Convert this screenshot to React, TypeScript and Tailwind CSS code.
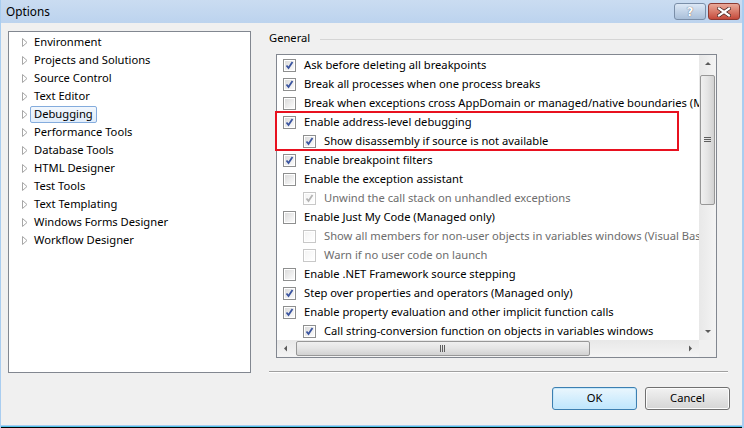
import React from "react";

const FONT = { fontFamily: '"Noto Sans", "Liberation Sans", sans-serif' };

function Tri() {
  return (
    <svg width="6" height="9" viewBox="0 0 6 9" className="shrink-0">
      <path d="M0.5 0.5 L5 4.5 L0.5 8.5 Z" fill="#ffffff" stroke="#a6a6a6" strokeWidth="1" />
    </svg>
  );
}

function Check({ checked, disabled }: { checked: boolean; disabled?: boolean }) {
  return (
    <div
      className={
        "w-[13px] h-[13px] shrink-0 border p-[1px] " +
        (disabled ? "border-[#c8c8c8] bg-white" : "border-[#8e8f8f] bg-white")
      }
    >
      <div
        className={
          "w-full h-full relative " +
          (disabled
            ? "bg-gradient-to-br from-[#f4f4f4] to-[#ffffff]"
            : "bg-gradient-to-br from-[#dcdcdc] to-[#fbfbfb]")
        }
      >
        {checked && (
          <svg width="9" height="9" viewBox="0 0 9 9" className="absolute left-0 top-0">
            <path
              d="M1.5 4.5 L3.5 7 L7.5 1"
              fill="none"
              stroke={disabled ? "#b4b4b4" : "#3b55a0"}
              strokeWidth="1.8"
            />
          </svg>
        )}
      </div>
    </div>
  );
}

type Row = { text: string; checked: boolean; indent?: boolean; disabled?: boolean };

const rows: Row[] = [
  { text: "Ask before deleting all breakpoints", checked: true },
  { text: "Break all processes when one process breaks", checked: true },
  { text: "Break when exceptions cross AppDomain or managed/native boundaries (Managed only)", checked: false },
  { text: "Enable address-level debugging", checked: true },
  { text: "Show disassembly if source is not available", checked: true, indent: true },
  { text: "Enable breakpoint filters", checked: true },
  { text: "Enable the exception assistant", checked: false },
  { text: "Unwind the call stack on unhandled exceptions", checked: true, indent: true, disabled: true },
  { text: "Enable Just My Code (Managed only)", checked: false },
  { text: "Show all members for non-user objects in variables windows (Visual Basic only)", checked: false, indent: true, disabled: true },
  { text: "Warn if no user code on launch", checked: false, indent: true, disabled: true },
  { text: "Enable .NET Framework source stepping", checked: false },
  { text: "Step over properties and operators (Managed only)", checked: true },
  { text: "Enable property evaluation and other implicit function calls", checked: true },
  { text: "Call string-conversion function on objects in variables windows", checked: true, indent: true },
];

const tree = [
  "Environment",
  "Projects and Solutions",
  "Source Control",
  "Text Editor",
  "Debugging",
  "Performance Tools",
  "Database Tools",
  "HTML Designer",
  "Test Tools",
  "Text Templating",
  "Windows Forms Designer",
  "Workflow Designer",
];

function ArrowBtn({ dir }: { dir: "up" | "down" | "left" | "right" }) {
  const paths: Record<string, string> = {
    up: "M1 4 L4 1 L7 4 Z",
    down: "M1 1 L4 4 L7 1 Z",
    left: "M4 0.5 L1 3.5 L4 6.5 Z",
    right: "M1 0.5 L4 3.5 L1 6.5 Z",
  };
  const vert = dir === "up" || dir === "down";
  return (
    <div className="w-[17px] h-[17px] shrink-0 flex items-center justify-center">
      <svg width={vert ? 8 : 5} height={vert ? 5 : 7} viewBox={vert ? "0 0 8 5" : "0 0 5 7"}>
        <path d={paths[dir]} fill="#5a5a5a" />
      </svg>
    </div>
  );
}

export default function App() {
  return (
    <div
      className="w-[744px] h-[428px] overflow-hidden flex flex-col bg-[#f0f0f0] border-l border-l-[#a9cdf0] border-r-2 border-r-[#a9cdf0] text-[11.2px] text-black"
      style={FONT}
    >
      {/* Title bar */}
      <div className="h-[23px] shrink-0 flex items-center bg-gradient-to-b from-[#cadcf1] to-[#bcd3ee] relative">
        <span className="ml-[5px] text-[11.8px] text-black">Options</span>
        <div className="absolute right-[2px] top-[3px] flex gap-[2px]">
          <div className="w-[32px] h-[17px] rounded-[3px] border border-[#7a8ea8] bg-gradient-to-b from-[#dce8f6] to-[#a9bfd9] flex items-center justify-center">
            <span
              className="text-white font-bold text-[12px] leading-none"
              style={{ textShadow: "0 0 1px #334", fontFamily: '"DejaVu Sans", sans-serif' }}
            >
              ?
            </span>
          </div>
          <div className="w-[32px] h-[17px] rounded-[3px] border border-[#8c3a32] bg-gradient-to-b from-[#e9a99a] to-[#c4493a] flex items-center justify-center">
            <svg width="14" height="10" viewBox="0 0 14 10">
              <path d="M2 1.5 L12 8.5 M12 1.5 L2 8.5" stroke="#3b1a17" strokeWidth="3.6" strokeLinecap="square" />
              <path d="M2 1.5 L12 8.5 M12 1.5 L2 8.5" stroke="#ffffff" strokeWidth="2.2" strokeLinecap="square" />
            </svg>
          </div>
        </div>
      </div>

      {/* Body */}
      <div className="flex-1 flex pl-[7px] pt-[8px] min-h-0">
        {/* Tree */}
        <div className="w-[243px] h-[342px] shrink-0 border border-[#828790] bg-white pt-[1px]">
          {tree.map((t) => (
            <div key={t} className="h-[18px] flex items-center">
              <div className="w-[25px] pl-[13px] flex items-center">
                <Tri />
              </div>
              {t === "Debugging" ? (
                <span className="ml-[-4px] h-[17px] px-[3px] flex items-center rounded-[2px] border border-[#84acdd] bg-gradient-to-b from-[#f2f7fd] to-[#e1edfb]">
                  {t}
                </span>
              ) : (
                <span>{t}</span>
              )}
            </div>
          ))}
        </div>

        {/* Right side */}
        <div className="flex-1 min-w-0 flex flex-col pl-[18px] pr-[14px]">
          <div className="h-[15px] flex items-center">
            <span className="mr-[10px]">General</span>
            <div className="flex-1 h-px bg-[#d5d5d5] mt-[1px] mr-[5px]" />
          </div>

          <div className="ml-[7px] mr-[11px] mt-[8px] h-[304px] border border-[#828790] bg-white flex flex-col relative">
            <div className="flex flex-1 min-h-0">
              <div className="flex-1 min-w-0 overflow-hidden pt-[1px]">
                {rows.map((r, i) => (
                  <div
                    key={i}
                    className={"h-[19px] flex items-center whitespace-nowrap " + (r.indent ? "pl-[26px]" : "pl-[6px]")}
                  >
                    <Check checked={r.checked} disabled={r.disabled} />
                    <span className={"ml-[8px] " + (r.disabled ? "text-[#6d6d6d]" : "")}>{r.text}</span>
                  </div>
                ))}
              </div>
              {/* vertical scrollbar */}
              <div className="w-[17px] shrink-0 flex flex-col bg-gradient-to-r from-[#e8e8e8] to-[#f4f4f4]">
                <ArrowBtn dir="up" />
                <div className="h-[3px]" />
                <div className="h-[130px] mx-[1px] rounded-[2px] border border-[#979797] bg-gradient-to-r from-[#f0f0f0] via-[#e4e4e4] to-[#d2d2d2] flex items-center justify-center">
                  <svg width="7" height="6" viewBox="0 0 7 6">
                    <path d="M0 0.5 H7 M0 2.5 H7 M0 4.5 H7" stroke="#5e5e5e" strokeWidth="1" />
                  </svg>
                </div>
                <div className="flex-1" />
                <ArrowBtn dir="down" />
              </div>
            </div>
            {/* horizontal scrollbar */}
            <div className="h-[17px] shrink-0 flex">
              <div className="flex-1 min-w-0 flex bg-gradient-to-b from-[#e8e8e8] to-[#f4f4f4]">
                <ArrowBtn dir="left" />
                <div className="w-[2px]" />
                <div className="w-[294px] my-[1px] rounded-[2px] border border-[#979797] bg-gradient-to-b from-[#f0f0f0] via-[#e4e4e4] to-[#d2d2d2] flex items-center justify-center">
                  <svg width="6" height="7" viewBox="0 0 6 7">
                    <path d="M0.5 0 V7 M2.5 0 V7 M4.5 0 V7" stroke="#5e5e5e" strokeWidth="1" />
                  </svg>
                </div>
                <div className="flex-1" />
                <ArrowBtn dir="right" />
              </div>
              <div className="w-[17px] bg-[#f0f0f0]" />
            </div>
            {/* Red highlight box */}
            <div className="absolute left-[-2px] top-[56px] w-[404px] h-[40px] border-2 border-[#e8111f] pointer-events-none" />
          </div>

          <div className="mt-[13px] h-px bg-[#a0a0a0]" />
          <div className="border-t border-white" />

          <div className="flex justify-end gap-[8px] mt-[14px] mr-[-2px]">
            <div className="w-[85px] h-[23px] rounded-[3px] border border-[#3c7fb1] bg-gradient-to-b from-[#eaf6fd] to-[#bee6fd] flex items-center justify-center shadow-[inset_0_0_0_1px_#c5e7fa]">
              OK
            </div>
            <div className="w-[85px] h-[23px] rounded-[3px] border border-[#707070] bg-gradient-to-b from-[#f2f2f2] to-[#d5d5d5] flex items-center justify-center shadow-[inset_0_0_0_1px_#fcfcfc]">
              Cancel
            </div>
          </div>
        </div>
      </div>
      <div className="h-px bg-[#a9cdf0] shrink-0" />
      <div className="h-px bg-[#4fc1e9] shrink-0" />
      <div className="h-px bg-black shrink-0" />
    </div>
  );
}
